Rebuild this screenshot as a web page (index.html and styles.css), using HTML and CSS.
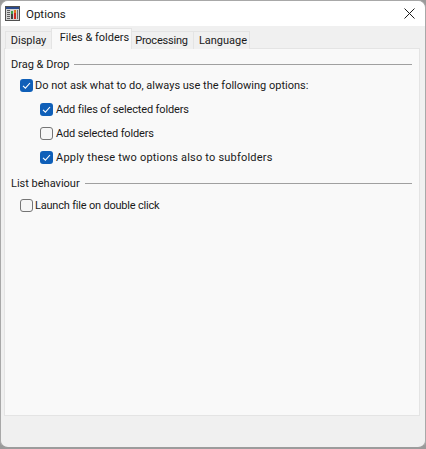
FILE: index.html
```html
<!DOCTYPE html>
<html lang="en">
<head>
<meta charset="utf-8">
<title>Options</title>
<link rel="stylesheet" href="styles.css">
</head>
<body>
<div class="window">
  <header class="titlebar">
    <svg class="app-icon" width="15" height="15" viewBox="0 0 15 15" aria-hidden="true">
      <rect x="0.5" y="0.5" width="14" height="14" fill="#d4d4d4" stroke="#505050"/>
      <rect x="1" y="1" width="13" height="2" fill="#2a4a8c"/>
      <rect x="2" y="4" width="3" height="1" fill="#606060"/>
      <rect x="2" y="6" width="3" height="1" fill="#606060"/>
      <rect x="2" y="8" width="3" height="1" fill="#606060"/>
      <rect x="2" y="10" width="3" height="1" fill="#606060"/>
      <rect x="2" y="12" width="3" height="1" fill="#606060"/>
      <rect x="6" y="5" width="2" height="3" fill="#3fa04a"/>
      <rect x="6" y="8" width="2" height="5" fill="#404040"/>
      <rect x="9" y="4" width="2" height="3" fill="#e07a1f"/>
      <rect x="9" y="7" width="2" height="6" fill="#d02a20"/>
      <rect x="12" y="4" width="1" height="9" fill="#707070"/>
    </svg>
    <span class="title">Options</span>
    <svg class="close" width="11" height="11" viewBox="0 0 11 11" aria-hidden="true">
      <path d="M0.5 0.5L10.5 10.5M10.5 0.5L0.5 10.5" stroke="#1a1a1a" stroke-width="1" fill="none"/>
    </svg>
  </header>
  <main class="content">
    <nav class="tabs">
      <div class="tab tab-display">Display</div>
      <div class="tab tab-files">Files &amp; folders</div>
      <div class="tab tab-processing">Processing</div>
      <div class="tab tab-language">Language</div>
    </nav>
    <section class="panel">
      <div class="group-head"><span>Drag &amp; Drop</span><i class="rule"></i></div>
      <label class="check level1"><span class="box on"><svg width="13" height="13" viewBox="0 0 13 13"><path d="M3 6.8L5.4 9.2L10 4" stroke="#fff" stroke-width="1.1" fill="none"/></svg></span>Do not ask what to do, always use the following options:</label>
      <label class="check level2 tight"><span class="box on"><svg width="13" height="13" viewBox="0 0 13 13"><path d="M3 6.8L5.4 9.2L10 4" stroke="#fff" stroke-width="1.1" fill="none"/></svg></span>Add files of selected folders</label>
      <label class="check level2 tight"><span class="box"></span>Add selected folders</label>
      <label class="check level2 loose"><span class="box on"><svg width="13" height="13" viewBox="0 0 13 13"><path d="M3 6.8L5.4 9.2L10 4" stroke="#fff" stroke-width="1.1" fill="none"/></svg></span>Apply these two options also to subfolders</label>
      <div class="group-head second"><span>List behaviour</span><i class="rule"></i></div>
      <label class="check level1 tighter"><span class="box"></span>Launch file on double click</label>
    </section>
  </main>
</div>
</body>
</html>
```
FILE: styles.css
```css
html, body {
  margin: 0;
  padding: 0;
  width: 426px;
  height: 449px;
  overflow: hidden;
  background: #9a9a9a;
}
.window {
  box-sizing: border-box;
  width: 426px;
  height: 449px;
  border: 1px solid #a8a8a8;
  border-bottom: 2px solid #9c9c9c;
  border-radius: 8px;
  overflow: hidden;
  background: #f0f0f0;
  display: flex;
  flex-direction: column;
  font-family: Roboto, "Open Sans", sans-serif;
  font-size: 11px;
  white-space: nowrap;
  color: #1a1a1a;
}
.titlebar {
  height: 25px;
  background: #fff;
  display: flex;
  align-items: center;
  padding: 0 10px 0 4px;
  flex: none;
}
.app-icon { flex: none; }
.title {
  margin-left: 6px;
  font-size: 11.5px;
  flex: 1;
}
.close { flex: none; }
.content {
  flex: 1;
  display: flex;
  flex-direction: column;
  padding: 0 5px 31px 3px;
  min-height: 0;
}
.tabs {
  display: flex;
  align-items: flex-end;
  height: 23px;
  margin-bottom: -1px;
  position: relative;
  padding-left: 1px;
}
.tab {
  box-sizing: border-box;
  height: 18px;
  line-height: 17px;
  text-align: center;
  border: 1px solid #e4e4e4;
  border-bottom: none;
  background: #f0f0f0;
}
.tab-display { width: 46px; border-right: none; }
.tab-files {
  width: 81px;
  height: 21px;
  line-height: 17px;
  padding-left: 6px;
  background: #f9f9f9;
  position: relative;
  z-index: 1;
  padding-bottom: 2px;
}
.tab-processing { width: 61px; border-left: none; border-right: none; letter-spacing: -0.2px; padding-right: 2px; }
.tab-language { width: 57px; padding-left: 3px; }
.panel {
  flex: 1;
  background: #f9f9f9;
  border: 1px solid #e4e4e4;
  padding: 6px 7px 0 6px;
  display: flex;
  flex-direction: column;
  min-height: 0;
}
.group-head {
  display: flex;
  align-items: center;
  gap: 5px;
  height: 18px;
}
.group-head.second { margin-top: 5px; margin-bottom: 1px; }
.rule {
  flex: 1;
  height: 1px;
  background: #a0a0a0;
}
.check {
  display: flex;
  align-items: center;
  height: 24px;
}
.level1 { padding-left: 9px; }
.level2 { padding-left: 29px; }
.level2 .box { margin-right: 3px; }
.tight { letter-spacing: -0.14px; }
.loose { letter-spacing: 0.2px; }
.tighter { letter-spacing: -0.2px; }
.box {
  box-sizing: border-box;
  width: 13px;
  height: 13px;
  margin-right: 2px;
  flex: none;
  border: 1px solid #757575;
  border-radius: 3px;
  background: #f6f6f6;
  display: flex;
}
.box.on {
  background: #0f5fb8;
  border: none;
}
```
